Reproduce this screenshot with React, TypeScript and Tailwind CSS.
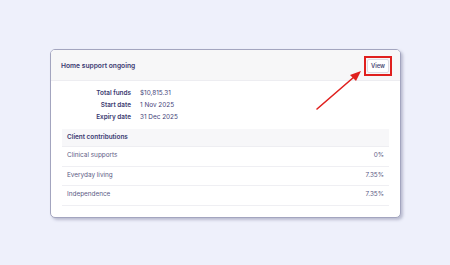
import React from "react";

const details = [
  { label: "Total funds", value: "$10,815.31" },
  { label: "Start date", value: "1 Nov 2025" },
  { label: "Expiry date", value: "31 Dec 2025" },
];

const contributions = [
  { name: "Clinical supports", pct: "0%" },
  { name: "Everyday living", pct: "7.35%" },
  { name: "Independence", pct: "7.35%" },
];

export default function App() {
  return (
    <div
      className="relative w-[450px] h-[265px] bg-[#eef0fb] pt-[49px] pl-[50px]"
      style={{ fontFamily: "Inter, 'Noto Sans', sans-serif" }}
    >
      <div className="w-[351px] rounded-[5px] border border-[#a3a5bf] bg-white overflow-hidden shadow-[2px_2px_3px_rgba(90,92,130,0.35)]">
        <div className="h-[31px] pt-[2px] flex items-center justify-between pl-[10px] pr-[8px] bg-[#f7f7f8] border-b border-[#ededf1]">
          <span className="text-[6.7px] font-semibold text-[#3a3970]">Home support ongoing</span>
          <div className="border-2 border-[#e0201e] p-[1px]">
            <div className="w-[22px] h-[14px] flex items-center justify-center rounded-[2px] border border-[#dcdce4] bg-white text-[5.8px] font-semibold text-[#4a4975]">
              View
            </div>
          </div>
        </div>

        <div className="pt-[7px] flex flex-col">
          {details.map((d) => (
            <div key={d.label} className="h-[12px] flex items-center text-[6.4px]">
              <span className="w-[80px] text-right font-semibold text-[#3a3970]">{d.label}</span>
              <span className="ml-[9px] text-[#45447a]">{d.value}</span>
            </div>
          ))}
        </div>

        <div className="mx-[11px] mt-[5px] mb-[11px]">
          <div className="h-[18px] flex items-center pl-[5px] bg-[#f7f7f9] border-b border-[#eeeef2] text-[6.4px] font-semibold text-[#3a3970]">
            Client contributions
          </div>
          {contributions.map((c) => (
            <div
              key={c.name}
              className="h-[19.5px] flex items-center justify-between pl-[5px] pr-[5px] border-b border-[#efeff3] text-[6.4px] text-[#5c5b85]"
            >
              <span>{c.name}</span>
              <span>{c.pct}</span>
            </div>
          ))}
        </div>
      </div>

      <svg className="absolute left-0 top-0" width="450" height="265" viewBox="0 0 450 265">
        <line x1="317" y1="109" x2="354" y2="77" stroke="#e0201e" strokeWidth="1.6" strokeLinecap="round" />
        <polygon points="361,71 350,75 356,81" fill="#e0201e" />
      </svg>
    </div>
  );
}
